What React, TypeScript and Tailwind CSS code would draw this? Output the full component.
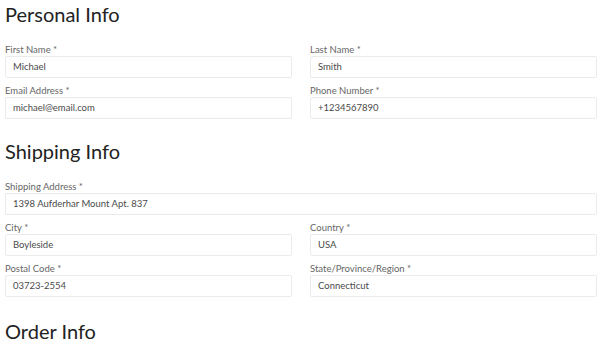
import React from "react";

type Field = {
    label: string;
    value: string;
    full?: boolean;
};

const sections: { title: string; fields: Field[] }[] = [
    {
        title: "Personal Info",
        fields: [
            { label: "First Name *", value: "Michael" },
            { label: "Last Name *", value: "Smith" },
            { label: "Email Address *", value: "michael@email.com" },
            { label: "Phone Number *", value: "+1234567890" },
        ],
    },
    {
        title: "Shipping Info",
        fields: [
            { label: "Shipping Address *", value: "1398 Aufderhar Mount Apt. 837", full: true },
            { label: "City *", value: "Boyleside" },
            { label: "Country *", value: "USA" },
            { label: "Postal Code *", value: "03723-2554" },
            { label: "State/Province/Region *", value: "Connecticut" },
        ],
    },
];

const FormField = ({ field }: { field: Field }) => (
    <div className={field.full ? "col-span-2" : ""}>
        <label className="block text-[9.5px] leading-[13px] text-[#666]">{field.label}</label>
        <div className="h-[22px] border border-[#ebebeb] rounded-[2px] bg-white px-[7px] flex items-center text-[9.5px] text-[#4a4a4a]">
            {field.value}
        </div>
    </div>
);

const App: React.FC = () => {
    return (
        <div
            className="w-[600px] h-[350px] bg-white pl-[5px] pr-[3px] pt-[2px] overflow-hidden"
            style={{ fontFamily: "Lato, 'Noto Sans', sans-serif" }}
        >
            {sections.map((section, i) => (
                <div key={section.title} className={i > 0 ? "mt-[20px]" : ""}>
                    <h2 className="text-[20px] leading-[24px] text-[#222]">{section.title}</h2>
                    <div className="grid grid-cols-2 gap-x-[18px] gap-y-[6px] mt-[17px]">
                        {section.fields.map((field) => (
                            <FormField key={field.label} field={field} />
                        ))}
                    </div>
                </div>
            ))}
            <h2 className="mt-[22px] text-[20px] leading-[24px] text-[#222]">Order Info</h2>
        </div>
    );
};

export default App;
